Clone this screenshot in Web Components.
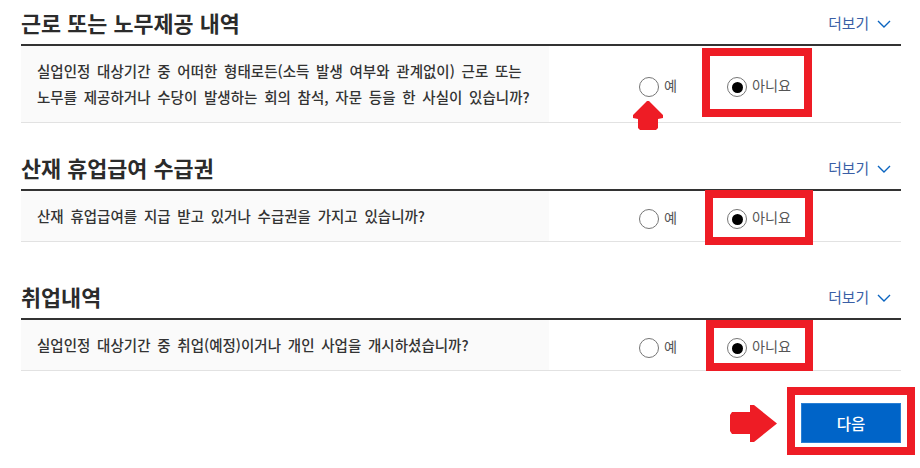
<!DOCTYPE html>
<html lang="ko">
<head>
<meta charset="utf-8">
<title>근로 또는 노무제공 내역</title>
<style>
    html, body { margin: 0; background: #fff; }
    body {
        position: relative;
        width: 920px;
        height: 468px;
        overflow: hidden;
        font-family: "Noto Sans CJK KR", "Noto Sans", sans-serif;
    }
</style>
</head>
<body>
<form-page>
    <form-section heading="근로 또는 노무제공 내역" head-height="44" style="--row-h: 76px">
        <form-question>실업인정 대상기간 중 어떠한 형태로든(소득 발생 여부와 관계없이) 근로 또는<br>노무를 제공하거나 수당이 발생하는 회의 참석, 자문 등을 한 사실이 있습니까?</form-question>
    </form-section>
    <form-section heading="산재 휴업급여 수급권" head-height="66" style="--row-h: 50px">
        <form-question>산재 휴업급여를 지급 받고 있거나 수급권을 가지고 있습니까?</form-question>
    </form-section>
    <form-section heading="취업내역" head-height="76" style="--row-h: 50px">
        <form-question>실업인정 대상기간 중 취업(예정)이거나 개인 사업을 개시하셨습니까?</form-question>
    </form-section>
    <next-button>다음</next-button>
</form-page>

<mark-box style="left:702px;top:48px;width:110px;height:69px"></mark-box>
<mark-box style="left:705px;top:190px;width:108px;height:55px"></mark-box>
<mark-box style="left:706px;top:320px;width:107px;height:51px"></mark-box>
<mark-box style="left:787px;top:387px;width:128px;height:68px"></mark-box>
<mark-arrow direction="up" style="left:633px;top:101px"></mark-arrow>
<mark-arrow direction="right" style="left:730px;top:405px"></mark-arrow>

<script>
class FormPage extends HTMLElement {
    constructor() {
        super();
        this.attachShadow({ mode: 'open' }).innerHTML = `
            <style>
                :host { display: flex; flex-direction: column; padding: 0 19px 0 21px; }
            </style>
            <slot></slot>
        `;
    }
}

class FormSection extends HTMLElement {
    constructor() {
        super();
        this.attachShadow({ mode: 'open' }).innerHTML = `
            <style>
                :host { display: block; }
                .head {
                    display: flex;
                    align-items: flex-end;
                    justify-content: space-between;
                    box-sizing: border-box;
                    padding-bottom: 8px;
                }
                h2 { margin: 0; font-size: 21.8px; line-height: 26px; font-weight: 700; color: #2b2b2b; }
                .more {
                    display: flex;
                    align-items: center;
                    gap: 8px;
                    padding-right: 10px;
                    padding-bottom: 3px;
                    font-size: 14.8px;
                    line-height: 20px;
                    color: #3a5fa6;
                }
                svg { display: block; margin-top: 2px; }
                .body { border-top: 2px solid #333; border-bottom: 1px solid #e2e2e2; }
            </style>
            <div class="head">
                <h2 id="tTitle"></h2>
                <span class="more">더보기
                    <svg width="14" height="8" viewBox="0 0 14 8" fill="none" stroke="#0a64c0" stroke-width="1.4"><path d="M1 1l6 6 6-6"/></svg>
                </span>
            </div>
            <div class="body"><slot></slot></div>
        `;
        this.shadowRoot.querySelector('#tTitle').textContent = this.getAttribute('heading');
        this.shadowRoot.querySelector('.head').style.height = this.getAttribute('head-height') + 'px';
    }
}

class FormQuestion extends HTMLElement {
    constructor() {
        super();
        this.attachShadow({ mode: 'open' }).innerHTML = `
            <style>
                :host {
                    display: grid;
                    grid-template-columns: 528px 1fr;
                    height: var(--row-h);
                }
                .text {
                    display: flex;
                    align-items: center;
                    box-sizing: border-box;
                    padding-left: 16px;
                    background: #fafafa;
                    font-size: 14.5px;
                    word-spacing: 2.7px;
                    line-height: 26px;
                    font-weight: 500;
                    color: #333;
                    white-space: nowrap;
                }
                .answers {
                    display: grid;
                    grid-template-columns: 88px auto;
                    align-content: center;
                    justify-content: start;
                    padding: 6px 0 0 90px;
                }
            </style>
            <div class="text"><div><slot></slot></div></div>
            <div class="answers">
                <radio-option>예</radio-option>
                <radio-option checked>아니요</radio-option>
            </div>
        `;
    }
}

class RadioOption extends HTMLElement {
    constructor() {
        super();
        this.attachShadow({ mode: 'open' }).innerHTML = `
            <style>
                :host {
                    display: flex;
                    align-items: flex-start;
                    gap: 5px;
                    font-size: 14.2px;
                    line-height: 17px;
                    color: #555;
                }
                .dot {
                    display: flex;
                    align-items: center;
                    justify-content: center;
                    box-sizing: border-box;
                    width: 20px;
                    height: 20px;
                    border: 1px solid #767676;
                    border-radius: 50%;
                    background: #fff;
                }
                :host([checked]) .dot::after {
                    content: "";
                    width: 11px;
                    height: 11px;
                    border-radius: 50%;
                    background: #000;
                }
            </style>
            <span class="dot"></span>
            <span><slot></slot></span>
        `;
    }
}

class NextButton extends HTMLElement {
    constructor() {
        super();
        this.attachShadow({ mode: 'open' }).innerHTML = `
            <style>
                :host { display: flex; justify-content: flex-end; padding-top: 32px; }
                button {
                    width: 100px;
                    height: 40px;
                    padding: 0;
                    border: 1px solid #2a7fd4;
                    background: #0064c8;
                    color: #fff;
                    font: 500 15.5px "Noto Sans CJK KR", sans-serif;
                }
            </style>
            <button><slot></slot></button>
        `;
    }
}

// red marks drawn over the captured page
class MarkBox extends HTMLElement {
    constructor() {
        super();
        this.attachShadow({ mode: 'open' }).innerHTML = `
            <style>
                :host {
                    position: absolute;
                    box-sizing: border-box;
                    border: 8px solid #ee1c25;
                }
            </style>
        `;
    }
}

class MarkArrow extends HTMLElement {
    constructor() {
        super();
        const up = this.getAttribute('direction') === 'up';
        const shape = up
            ? '<svg width="30" height="29" viewBox="0 0 30 29"><path d="M16 0L30 14V17L25 18V27L23 29H7L5 27V18L0 17V14L14 0Z" fill="#ee1c25"/></svg>'
            : '<svg width="47" height="37" viewBox="0 0 47 37"><path d="M2 7H20V0H24L47 18.5L24 37H20V29H2L0 26V10Z" fill="#ee1c25"/></svg>';
        this.attachShadow({ mode: 'open' }).innerHTML = `
            <style>
                :host { position: absolute; display: block; line-height: 0; }
            </style>
            ${shape}
        `;
    }
}

customElements.define('form-page', FormPage);
customElements.define('form-section', FormSection);
customElements.define('form-question', FormQuestion);
customElements.define('radio-option', RadioOption);
customElements.define('next-button', NextButton);
customElements.define('mark-box', MarkBox);
customElements.define('mark-arrow', MarkArrow);
</script>
</body>
</html>
